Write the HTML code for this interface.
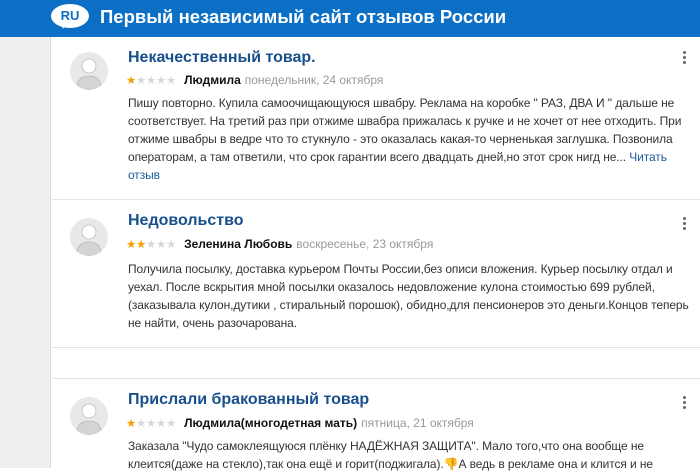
<!DOCTYPE html>
<html><head><meta charset="utf-8"><style>
*{margin:0;padding:0;box-sizing:border-box}
body{width:700px;height:468px;overflow:hidden;background:#fff;font-family:"Liberation Sans",Arial,sans-serif;position:relative}
.hdr{position:absolute;left:0;top:0;width:700px;height:37px;background:#0b6fc6}
.bubble{position:absolute;left:51px;top:4px;width:38px;height:24px;background:#fff;border-radius:50%;color:#0b6fc6;font-weight:bold;font-size:13px;text-align:center;line-height:23px}
.tail{position:absolute;left:60px;top:22px;width:0;height:0;border-left:4px solid transparent;border-right:4px solid transparent;border-top:7px solid #fff;transform:rotate(20deg)}
.htitle{position:absolute;left:100px;top:6px;color:#fff;font-size:18.5px;font-weight:bold;white-space:nowrap}
.side{position:absolute;left:0;top:37px;width:51px;height:431px;background:#efefef;border-right:1px solid #ddd}
.line{position:absolute;left:52px;width:648px;height:1px;background:#e4e4e4}
.card{position:absolute;left:52px;width:648px}
.av{position:absolute;left:18px;width:38px;height:38px;border-radius:50%;background:#e9e8e6;overflow:hidden}
.t{position:absolute;left:76px;font-size:16px;font-weight:bold;color:#17508d;white-space:nowrap}
.meta{position:absolute;left:74px;font-size:12px;white-space:nowrap}
.st{color:#d8d8d8;font-size:11.5px;letter-spacing:-0.3px}
.st b{color:#f5a000;font-weight:normal}
.nm{font-weight:bold;color:#111;margin-left:8px}
.dt{color:#999;margin-left:4px}
.tx{position:absolute;left:76px;width:562px;font-size:12px;line-height:18px;color:#333;letter-spacing:-0.1px}
.tx a{color:#1c5b9c;text-decoration:none}
.dots{position:absolute;left:631px;width:3px}
.dots i{display:block;width:3px;height:3px;border-radius:50%;background:#666;margin-bottom:2px}
</style></head><body>
<div class="hdr"><div class="bubble">RU</div><div class="tail"></div><div class="htitle">Первый независимый сайт отзывов России</div></div>
<div class="side"></div>

<div class="card" style="top:37px">
<div class="av" style="top:15px"><svg width="38" height="38"><circle cx="19" cy="14" r="7" fill="#fff" stroke="#aaa" stroke-width="0.6"/><path d="M6 38 C7 27 12 24 19 24 C26 24 31 27 32 38Z" fill="#d5d4d2" stroke="#aaa" stroke-width="0.6"/></svg></div>
<div class="t" style="top:12px">Некачественный товар.</div>
<div class="dots" style="top:14px"><i></i><i></i><i></i></div>
<div class="meta" style="top:36px"><span class="st"><b>★</b>★★★★</span><span class="nm">Людмила</span><span class="dt">понедельник, 24 октября</span></div>
<div class="tx" style="top:57px">Пишу повторно. Купила самоочищающуюся швабру. Реклама на коробке " РАЗ, ДВА И " дальше не соответствует. На третий раз при отжиме швабра прижалась к ручке и не хочет от нее отходить. При отжиме швабры в ведре что то стукнуло - это оказалась какая-то черненькая заглушка. Позвонила операторам, а там ответили, что срок гарантии всего двадцать дней,но этот срок нигд не... <a>Читать отзыв</a></div>
</div>
<div class="line" style="top:199px"></div>

<div class="card" style="top:200px">
<div class="av" style="top:18px"><svg width="38" height="38"><circle cx="19" cy="14" r="7" fill="#fff" stroke="#aaa" stroke-width="0.6"/><path d="M6 38 C7 27 12 24 19 24 C26 24 31 27 32 38Z" fill="#d5d4d2" stroke="#aaa" stroke-width="0.6"/></svg></div>
<div class="t" style="top:12px">Недовольство</div>
<div class="dots" style="top:17px"><i></i><i></i><i></i></div>
<div class="meta" style="top:37px"><span class="st"><b>★★</b>★★★</span><span class="nm">Зеленина Любовь</span><span class="dt">воскресенье, 23 октября</span></div>
<div class="tx" style="top:60px">Получила посылку, доставка курьером Почты России,без описи вложения. Курьер посылку отдал и уехал. После вскрытия мной посылки оказалось недовложение кулона стоимостью 699 рублей, (заказывала кулон,дутики , стиральный порошок), обидно,для пенсионеров это деньги.Концов теперь не найти, очень разочарована.</div>
</div>
<div class="line" style="top:347px"></div>
<div class="line" style="top:378px"></div>

<div class="card" style="top:379px">
<div class="av" style="top:18px"><svg width="38" height="38"><circle cx="19" cy="14" r="7" fill="#fff" stroke="#aaa" stroke-width="0.6"/><path d="M6 38 C7 27 12 24 19 24 C26 24 31 27 32 38Z" fill="#d5d4d2" stroke="#aaa" stroke-width="0.6"/></svg></div>
<div class="t" style="top:12px">Прислали бракованный товар</div>
<div class="dots" style="top:17px"><i></i><i></i><i></i></div>
<div class="meta" style="top:37px"><span class="st"><b>★</b>★★★★</span><span class="nm">Людмила(многодетная мать)</span><span class="dt">пятница, 21 октября</span></div>
<div class="tx" style="top:58px">Заказала "Чудо самоклеящуюся плёнку НАДЁЖНАЯ ЗАЩИТА". Мало того,что она вообще не клеится(даже на стекло),так она ещё и горит(поджигала).👎А ведь в рекламе она и клится и не</div>
</div>
</body></html>
